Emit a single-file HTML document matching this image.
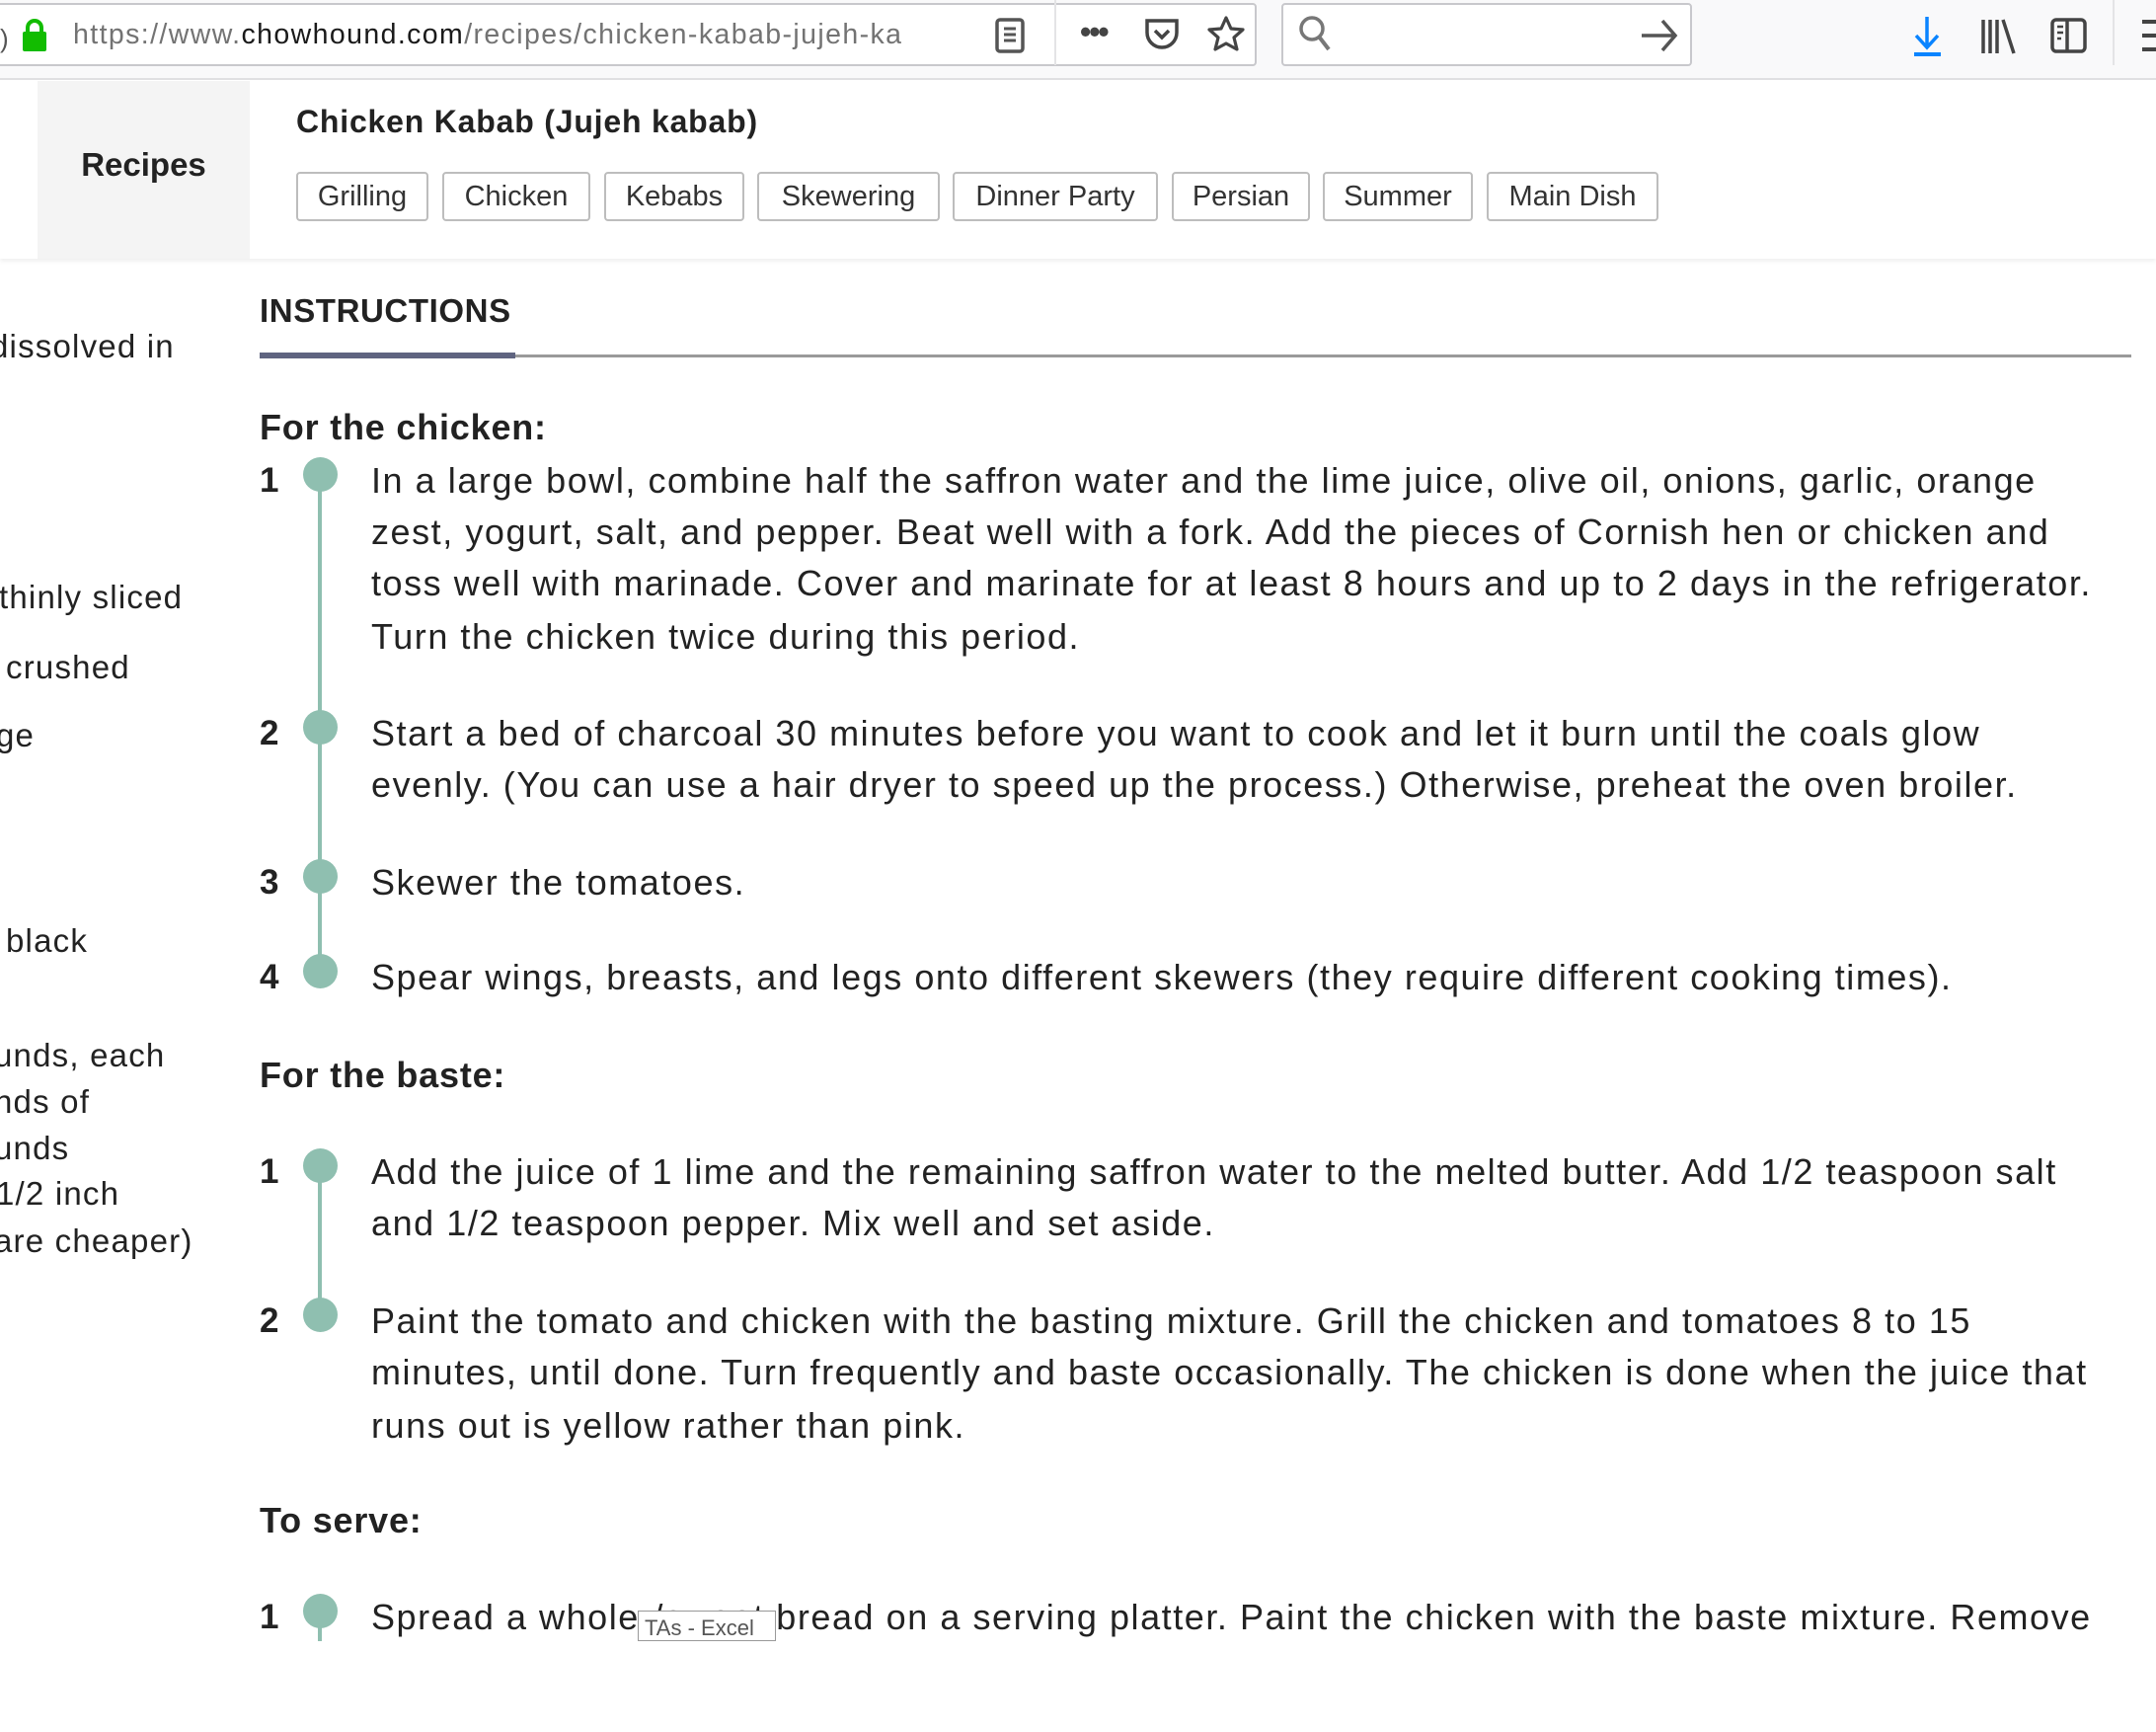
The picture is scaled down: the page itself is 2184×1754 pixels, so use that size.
<!DOCTYPE html>
<html><head><meta charset="utf-8"><style>
*{margin:0;padding:0;box-sizing:border-box}
body{width:2184px;height:1754px;position:relative;overflow:hidden;background:#fff;font-family:"Liberation Sans",Arial,sans-serif;color:#222}
.a{position:absolute;white-space:nowrap}
.tb{position:absolute;left:0;top:0;width:2184px;height:81px;background:#f9f9fa;border-bottom:2px solid #e0e0e2}
.box{position:absolute;background:#fff;border:2px solid #c8c8cc;border-radius:4px}
.tag{position:absolute;top:174px;height:50px;border:2px solid #bdbdbd;border-radius:4px;font-size:29px;line-height:46px;text-align:center;color:#333}
.ln{position:absolute;left:376px;font-size:36px;letter-spacing:1.55px;line-height:50px;white-space:nowrap;color:#222}
.num{position:absolute;left:263px;font-size:35px;font-weight:bold;line-height:50px}
.dot{position:absolute;left:307px;width:35px;height:35px;border-radius:50%;background:#8fbfb0}
.bar{position:absolute;left:322px;width:4px;background:#8fbfb0}
.h{position:absolute;left:263px;font-size:36px;letter-spacing:0.8px;font-weight:bold;line-height:50px}
.side{position:absolute;font-size:33px;letter-spacing:1.2px;line-height:44px;white-space:nowrap;color:#222}
</style></head><body>
<div class="tb"></div>
<div class="box" style="left:-10px;top:3px;width:1283px;height:64px"></div>
<div class="a" style="left:0;top:24px;font-size:26px;color:#555">)</div>
<svg class="a" style="left:20px;top:18px" width="30" height="36"><rect x="3" y="14" width="24" height="20" rx="2" fill="#12bc00"/><path d="M8 15V10a7 7 0 0 1 14 0v5" stroke="#12bc00" stroke-width="4" fill="none"/></svg>
<div class="a" style="left:74px;top:19px;font-size:28.5px;letter-spacing:1.4px;color:#737373">https://www.<span style="color:#1a1a1a">chowhound.com</span>/recipes/chicken-kabab-jujeh-ka</div>
<div class="a" style="left:930px;top:5px;width:60px;height:60px;background:linear-gradient(to right,rgba(255,255,255,0),#fff)"></div>
<svg class="a" style="left:1006px;top:17px" width="36" height="40"><rect x="4" y="3" width="26" height="32" rx="3" stroke="#555" stroke-width="3.5" fill="none"/><path d="M11 12h12M11 18h12M11 24h12" stroke="#555" stroke-width="3"/></svg>
<div class="a" style="left:1068px;top:0;width:2px;height:66px;background:#e4e4e6"></div>
<div class="a" style="left:1094px;top:14px;font-size:32px;font-weight:bold;color:#444;letter-spacing:-2px">•••</div>
<svg class="a" style="left:1158px;top:16px" width="40" height="40"><path d="M4 5h30v12a15 15 0 0 1-30 0z" stroke="#444" stroke-width="3.5" fill="none"/><path d="M12 15l7 7 7-7" stroke="#444" stroke-width="3.5" fill="none"/></svg>
<svg class="a" style="left:1223px;top:15px" width="40" height="40"><path d="M19 3l5 11 12 1-9 8 3 12-11-6-11 6 3-12-9-8 12-1z" stroke="#444" stroke-width="3.2" fill="none" stroke-linejoin="round"/></svg>
<div class="box" style="left:1298px;top:3px;width:416px;height:64px"></div>
<svg class="a" style="left:1314px;top:14px" width="40" height="42"><circle cx="15" cy="15" r="11" stroke="#777" stroke-width="3.5" fill="none"/><path d="M22 23l10 13" stroke="#777" stroke-width="4"/></svg>
<svg class="a" style="left:1660px;top:16px" width="44" height="40"><path d="M3 20h34M24 5l13 15-13 15" stroke="#555" stroke-width="3.5" fill="none"/></svg>
<svg class="a" style="left:1933px;top:15px" width="40" height="44"><path d="M19 2v30M8 21l11 12 11-12" stroke="#0a84ff" stroke-width="3.5" fill="none"/><rect x="6" y="38" width="27" height="4" fill="#0a84ff"/></svg>
<svg class="a" style="left:2005px;top:18px" width="40" height="40"><path d="M4 2v34M11 2v34M18 2v34M24 2l11 34" stroke="#444" stroke-width="3.5"/></svg>
<svg class="a" style="left:2076px;top:17px" width="40" height="40"><rect x="3" y="3" width="33" height="32" rx="4" stroke="#444" stroke-width="3.5" fill="none"/><path d="M18 3v32" stroke="#444" stroke-width="3.5"/><path d="M8 10h6M8 16h6M8 22h4" stroke="#444" stroke-width="2.5"/></svg>
<div class="a" style="left:2140px;top:0;width:2px;height:66px;background:#e4e4e6"></div>
<svg class="a" style="left:2166px;top:18px" width="18" height="40"><path d="M4 4h14M4 18h14M4 32h14" stroke="#444" stroke-width="4"/></svg>

<div class="a" style="left:0;top:82px;width:2184px;height:180px;background:#fff;box-shadow:0 3px 4px rgba(0,0,0,0.06)"></div>
<div class="a" style="left:38px;top:82px;width:215px;height:180px;background:#f4f4f4"></div>
<div class="a" style="left:38px;top:148px;width:215px;text-align:center;font-size:33px;font-weight:bold;color:#222">Recipes</div>
<div class="a" style="left:300px;top:105px;font-size:32px;letter-spacing:0.8px;font-weight:bold;color:#222">Chicken Kabab (Jujeh kabab)</div>
<div class="tag" style="left:300px;width:134px">Grilling</div>
<div class="tag" style="left:448px;width:150px">Chicken</div>
<div class="tag" style="left:612px;width:142px">Kebabs</div>
<div class="tag" style="left:767px;width:185px">Skewering</div>
<div class="tag" style="left:965px;width:208px">Dinner Party</div>
<div class="tag" style="left:1187px;width:140px">Persian</div>
<div class="tag" style="left:1340px;width:152px">Summer</div>
<div class="tag" style="left:1506px;width:174px">Main Dish</div>

<div class="a" style="left:263px;top:296px;font-size:33px;letter-spacing:0.6px;font-weight:bold;color:#222">INSTRUCTIONS</div>
<div class="a" style="left:522px;top:359px;width:1637px;height:3px;background:#9a9a9a"></div>
<div class="a" style="left:263px;top:357px;width:259px;height:6px;background:#5f6480"></div>

<div class="side" style="left:-10px;top:329px">dissolved in</div>
<div class="side" style="left:-1px;top:583px">thinly sliced</div>
<div class="side" style="left:6px;top:654px">crushed</div>
<div class="side" style="left:-4px;top:723px">ge</div>
<div class="side" style="left:6px;top:931px">black</div>
<div class="side" style="left:-6px;top:1047px">unds, each</div>
<div class="side" style="left:-6px;top:1094px">nds of</div>
<div class="side" style="left:-6px;top:1141px">unds</div>
<div class="side" style="left:-4px;top:1187px">1/2 inch</div>
<div class="side" style="left:-6px;top:1235px">are cheaper)</div>

<div class="h" style="top:408px">For the chicken:</div>
<div class="bar" style="top:480px;height:510px"></div>
<div class="num" style="top:462px">1</div><div class="dot" style="top:463px"></div>
<div class="ln" style="top:462px">In a large bowl, combine half the saffron water and the lime juice, olive oil, onions, garlic, orange</div>
<div class="ln" style="top:514px">zest, yogurt, salt, and pepper. Beat well with a fork. Add the pieces of Cornish hen or chicken and</div>
<div class="ln" style="top:566px">toss well with marinade. Cover and marinate for at least 8 hours and up to 2 days in the refrigerator.</div>
<div class="ln" style="top:620px">Turn the chicken twice during this period.</div>
<div class="num" style="top:718px">2</div><div class="dot" style="top:719px"></div>
<div class="ln" style="top:718px">Start a bed of charcoal 30 minutes before you want to cook and let it burn until the coals glow</div>
<div class="ln" style="top:770px">evenly. (You can use a hair dryer to speed up the process.) Otherwise, preheat the oven broiler.</div>
<div class="num" style="top:869px">3</div><div class="dot" style="top:870px"></div>
<div class="ln" style="top:869px">Skewer the tomatoes.</div>
<div class="num" style="top:965px">4</div><div class="dot" style="top:966px"></div>
<div class="ln" style="top:965px">Spear wings, breasts, and legs onto different skewers (they require different cooking times).</div>

<div class="h" style="top:1064px">For the baste:</div>
<div class="bar" style="top:1180px;height:152px"></div>
<div class="num" style="top:1162px">1</div><div class="dot" style="top:1163px"></div>
<div class="ln" style="top:1162px">Add the juice of 1 lime and the remaining saffron water to the melted butter. Add 1/2 teaspoon salt</div>
<div class="ln" style="top:1214px">and 1/2 teaspoon pepper. Mix well and set aside.</div>
<div class="num" style="top:1313px">2</div><div class="dot" style="top:1314px"></div>
<div class="ln" style="top:1313px">Paint the tomato and chicken with the basting mixture. Grill the chicken and tomatoes 8 to 15</div>
<div class="ln" style="top:1365px">minutes, until done. Turn frequently and baste occasionally. The chicken is done when the juice that</div>
<div class="ln" style="top:1419px">runs out is yellow rather than pink.</div>

<div class="h" style="top:1515px">To serve:</div>
<div class="num" style="top:1613px">1</div><div class="dot" style="top:1614px"></div>
<div class="bar" style="top:1630px;height:32px"></div>
<div class="ln" style="top:1613px">Spread a whole-/sweet bread on a serving platter. Paint the chicken with the baste mixture. Remove</div>
<div class="a" style="left:0;top:1662px;width:2184px;height:92px;background:#fff"></div>
<div class="a" style="left:646px;top:1631px;width:140px;height:31px;background:#fff;border:1px solid #999;font-size:22px;color:#555;padding-left:6px;line-height:34px;overflow:hidden">TAs - Excel</div>
</body></html>
